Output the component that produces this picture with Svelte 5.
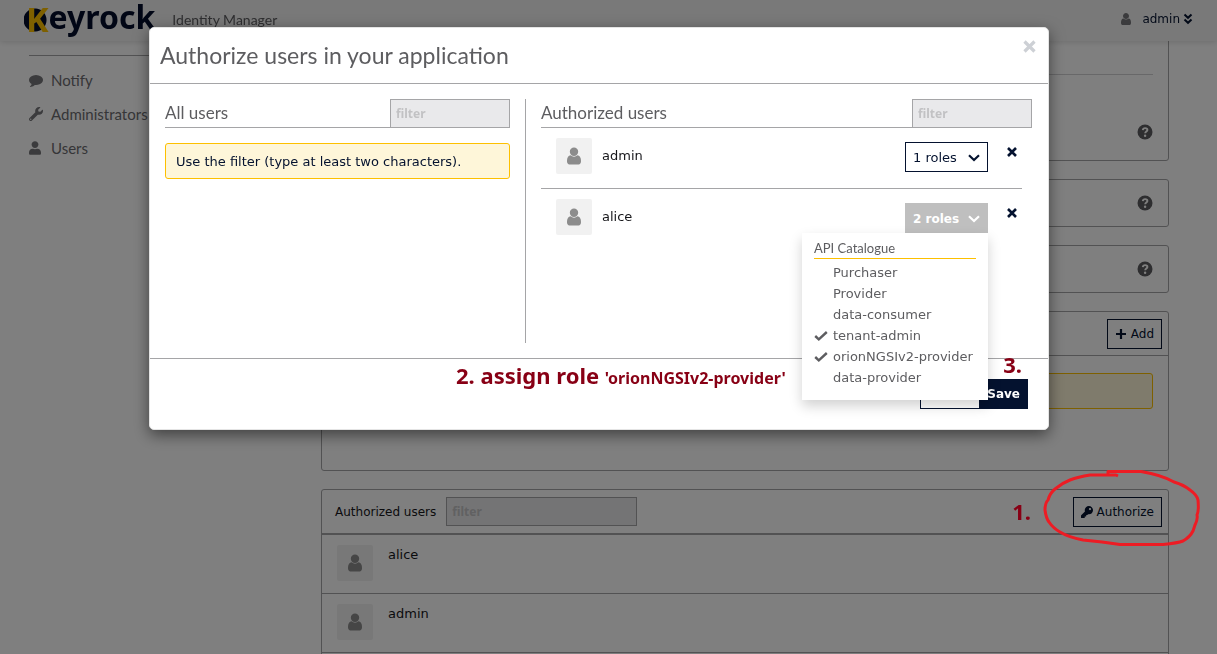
<script lang="ts">
  const nav = [
    { label: 'Notify', icon: 'comment' },
    { label: 'Administrators', icon: 'wrench' },
    { label: 'Users', icon: 'user' },
  ];
  const members = ['alice', 'admin', ''];
  const roles = [
    { name: 'Purchaser', on: false },
    { name: 'Provider', on: false },
    { name: 'data-consumer', on: false },
    { name: 'tenant-admin', on: true },
    { name: 'orionNGSIv2-provider', on: true },
    { name: 'data-provider', on: false },
  ];
  const authorized = [
    { name: 'admin', count: 1, open: false },
    { name: 'alice', count: 2, open: true },
  ];
</script>

{#snippet person()}
  <svg class="person" viewBox="0 0 1280 1792" aria-hidden="true"><path fill="currentColor" d="M1280 1399q0 109-62.500 187t-150.500 78h-854q-88 0-150.500-78t-62.500-187q0-85 8.500-160.500t31.500-152 58.500-131 94-89 134.500-34.500q131 128 313 128t313-128q76 0 134.500 34.500t94 89 58.500 131 31.500 152 8.500 160.500zm-256-887q0 159-112.500 271.500t-271.500 112.500-271.500-112.500-112.500-271.500 112.500-271.500 271.500-112.500 271.500 112.500 112.500 271.500z" /></svg>
{/snippet}

{#snippet help()}
  <svg class="help" viewBox="0 0 16 16" aria-hidden="true">
    <circle cx="8" cy="8" r="7.500" fill="#5d5d60" />
    <path d="M5.800 6.100C6 4.700 7 4.100 8.100 4.100c1.300 0 2.300.8 2.300 1.900C10.400 7.500 8.200 7.600 8.200 9.200" fill="none" stroke="#fff" stroke-width="1.900" />
    <circle cx="8.100" cy="11.700" r="1.200" fill="#fff" />
  </svg>
{/snippet}

{#snippet cross()}
  <svg class="cross" viewBox="0 0 12 12" aria-hidden="true"><path d="M2 2l8 8M10 2l-8 8" fill="none" stroke="currentColor" stroke-width="2.600" /></svg>
{/snippet}

<div class="page">
  <header class="top">
    <a class="logo" href="#home"><span class="k">K</span>eyrock</a>
    <span class="tagline">Identity Manager</span>
    <button class="account" type="button">
      {@render person()}
      <span>admin</span>
      <svg class="chev2" viewBox="0 0 10 12" aria-hidden="true"><path d="M1.500 1.500L5 4.800l3.500-3.300M1.500 6.500L5 9.800l3.500-3.300" fill="none" stroke="currentColor" stroke-width="2" /></svg>
    </button>
  </header>

  <div class="columns">
    <nav class="side">
      {#each nav as item}
        <a href="#{item.icon}">
          <span class="ico">
            {#if item.icon === 'comment'}
              <svg viewBox="0 0 1792 1792" width="14" height="14" aria-hidden="true"><path fill="currentColor" d="M1792 896q0 174-120 321.500t-326 233-450 85.500q-70 0-145-8-198 175-460 242-49 14-114 22-17 2-30.500-9t-17.500-29v-1q-3-4-.5-12t2-10 4.500-9.500l6-9 7-8.500 8-9q7-8 31-34.500t34.500-38 31-39.500 32.500-51 27-59 26-76q-157-89-247.500-220t-90.500-281q0-130 71-248.500t191-204.500 286-136.500 348-50.500 348 50.500 286 136.500 191 204.500 71 248.500z" /></svg>
            {:else if item.icon === 'wrench'}
              <svg viewBox="0 0 512 512" width="14" height="14" aria-hidden="true"><path fill="currentColor" d="M507.730 109.100c-2.240-9.030-13.540-12.090-20.120-5.510l-74.360 74.360-67.880-11.310-11.310-67.880 74.360-74.360c6.620-6.620 3.430-17.900-5.660-20.160-47.380-11.740-99.550.91-136.580 37.930-39.640 39.640-50.550 97.100-34.050 147.200L18.740 402.760c-24.990 24.990-24.990 65.510 0 90.500 24.990 24.990 65.510 24.990 90.500 0l213.210-213.210c50.120 16.710 107.470 5.680 147.370-34.220 37.070-37.070 49.700-89.320 37.910-136.730zM64 472c-13.250 0-24-10.750-24-24 0-13.260 10.750-24 24-24s24 10.740 24 24c0 13.250-10.750 24-24 24z" /></svg>
            {:else}
              <svg viewBox="0 0 448 512" width="12" height="14" aria-hidden="true"><path fill="currentColor" d="M224 256c70.700 0 128-57.300 128-128S294.700 0 224 0 96 57.300 96 128s57.300 128 128 128zm89.600 32h-16.700c-22.200 10.200-46.900 16-72.900 16s-50.600-5.800-72.900-16h-16.700C60.200 288 0 348.200 0 422.400V464c0 26.500 21.500 48 48 48h352c26.500 0 48-21.500 48-48v-41.600c0-74.200-60.200-134.400-134.400-134.400z" /></svg>
            {/if}
          </span>
          {item.label}
        </a>
      {/each}
    </nav>

    <main>
      <section class="panel info"><hr />{@render help()}</section>
      <section class="panel slim">{@render help()}</section>
      <section class="panel slim">{@render help()}</section>
      <section class="panel roles">
        <div class="bar">
          <button class="btn small" type="button">
            <svg viewBox="0 0 12 12" width="12" height="12" aria-hidden="true"><path d="M6 1v10M1 6h10" fill="none" stroke="currentColor" stroke-width="2.200" /></svg>
            Add
          </button>
        </div>
        <div class="notice"></div>
      </section>
      <section class="panel">
        <div class="bar heavy">
          <label for="member-filter">Authorized users</label>
          <input id="member-filter" class="filter wide" placeholder="filter" />
          <button class="btn small" type="button">
            <svg viewBox="0 0 512 512" width="12" height="12" aria-hidden="true"><path fill="currentColor" d="M512 176.001C512 273.203 433.202 352 336 352c-11.220 0-22.190-1.062-32.827-3.069l-24.012 27.014A23.999 23.999 0 0 1 261.223 384H224v40c0 13.255-10.745 24-24 24h-40v40c0 13.255-10.745 24-24 24H24c-13.255 0-24-10.745-24-24v-78.059c0-6.365 2.529-12.470 7.029-16.971l161.802-161.802C163.108 213.814 160 195.271 160 176 160 78.798 238.797.001 335.999 0 433.488-.001 512 78.511 512 176.001zM336 128c0 26.510 21.490 48 48 48s48-21.490 48-48-21.490-48-48-48-48 21.490-48 48z" /></svg>
            Authorize
          </button>
        </div>
        {#each members as m}
          <div class="member">
            {#if m}<span class="avatar">{@render person()}</span><span>{m}</span>{/if}
          </div>
        {/each}
      </section>
    </main>
  </div>
</div>

<div class="backdrop">
  <div class="dialog" role="dialog" aria-labelledby="dialog-title">
    <div class="dialog-head">
      <h2 id="dialog-title">Authorize users in your application</h2>
      <button class="close" type="button" aria-label="Close">{@render cross()}</button>
    </div>
    <div class="dialog-body">
      <section class="all">
        <div class="list-head">
          <h3><label for="all-filter">All users</label></h3>
          <input id="all-filter" class="filter" placeholder="filter" />
        </div>
        <p class="hint">Use the filter (type at least two characters).</p>
      </section>
      <section class="granted">
        <div class="list-head">
          <h3><label for="granted-filter">Authorized users</label></h3>
          <input id="granted-filter" class="filter" placeholder="filter" />
        </div>
        {#each authorized as user}
          <div class="row">
            <span class="avatar">{@render person()}</span>
            <span class="name">{user.name}</span>
            <div class="picker">
              <button class="btn" class:open={user.open} type="button" aria-expanded={user.open}>
                {user.count} roles
                <svg viewBox="0 0 12 8" width="12" height="8" aria-hidden="true"><path d="M1 1.300l5 4.700 5-4.700" fill="none" stroke="currentColor" stroke-width="2.200" /></svg>
              </button>
              {#if user.open}
                <div class="menu">
                  <h4>API Catalogue</h4>
                  <ul>
                    {#each roles as role}
                      <li>
                        <button type="button">
                          <span class="tick">
                            {#if role.on}<svg viewBox="0 0 14 10" width="14" height="10" aria-hidden="true"><path d="M1.200 5l3.600 3.300L12.800 1" fill="none" stroke="currentColor" stroke-width="2.400" /></svg>{/if}
                          </span>{role.name}
                        </button>
                      </li>
                    {/each}
                  </ul>
                </div>
              {/if}
            </div>
            <button class="remove" type="button" aria-label="Remove {user.name}">{@render cross()}</button>
          </div>
        {/each}
      </section>
    </div>
    <div class="dialog-foot">
      <button class="btn cancel" type="button">Cancel</button>
      <button class="btn save" type="button">Save</button>
    </div>
    <p class="note step2">2. assign role <small>'orionNGSIv2-provider'</small></p>
    <p class="note step3">3.</p>
  </div>
  <p class="note step1">1.</p>
  <svg class="ring" viewBox="0 0 164 84" aria-hidden="true">
    <path d="M78 11L76 10H50Q38 12 30 15T15 24Q10 28 8 35Q5 38 5 45Q6 53 9 57Q13 63 20 67Q28 72 43 75L62 77L80 79.500H123Q138 78 143 76Q150 72 153 66L155 60Q158 54 157 50Q159 46 158 35Q157 30 150 25Q144 20 134 17Q122 10 101 6.500H68V11" fill="none" stroke="#ed1c24" stroke-width="3" stroke-linejoin="round" />
  </svg>
</div>

<style>
  :global(body) { margin: 0; overflow: hidden; }
  .page, .backdrop { font: 13px/20px "DejaVu Sans", Verdana, sans-serif; color: #16161a; }
  .page *, .backdrop * { box-sizing: border-box; }
  .page { height: 100vh; overflow: hidden; background: #fff; }
  svg { display: block; flex: none; }
  button, input { font: inherit; color: inherit; }
  button { background: none; border: 0; padding: 0; }
  a { color: inherit; text-decoration: none; }
  h2, h3, h4, p, ul { margin: 0; padding: 0; list-style: none; font-weight: 400; }
  .person { width: 14px; height: 20px; color: #8c8c8c; }

  .top { position: fixed; inset: 0 0 auto; height: 41px; display: flex; background: #f2f2f2; box-shadow: 0 1px 6px rgba(0, 0, 0, 0.15); padding: 0 24px; z-index: 1; }
  .logo { font: 700 32px/34px "Noto Sans", sans-serif; color: #030d2b; background: radial-gradient(circle at 11px 20px, #030d2b 11px, transparent 12px); }
  .k { color: #fdc000; padding-left: 2px; font-size: 34px; line-height: 30px; vertical-align: -3px; }
  .tagline { font: 14px/40px Lato, sans-serif; color: #5d5d60; margin-left: 17px; }
  .account { margin-left: auto; display: flex; align-items: center; height: 37px; font-size: 12px; color: #04122f; }
  .account .person { width: 10px; height: 14px; margin-right: 11px; color: #77777a; }
  .chev2 { width: 10px; height: 12px; margin-left: 3px; }

  .columns { display: flex; padding: 20px 48px 0 29px; }
  .side { width: 292px; padding-right: 60px; margin-top: 35px; flex: none; }
  .side::before { content: ""; display: block; height: 1px; background: #a5a5a7; margin-bottom: 7px; }
  .side a { display: flex; align-items: center; height: 34px; font: 15px/20px Lato, sans-serif; color: #6c6c70; }
  .ico { width: 22px; color: #77777a; }
  main { flex: 1; display: flex; flex-direction: column; gap: 18px; }
  .panel { border: 1px solid #a5a5a7; border-radius: 3px; }
  .info { display: flex; flex-direction: column; align-items: flex-end; padding: 53px 15px 20px; }
  .info hr { width: 100%; height: 1px; border: 0; margin: 0 0 49px; background: #d0d0d2; }
  .help { width: 16px; height: 16px; }
  .slim { display: flex; justify-content: flex-end; padding: 15px; }
  .roles { padding-bottom: 61px; }
  .bar { display: flex; align-items: center; height: 44px; padding: 0 6px 0 13px; border-bottom: 1px solid #a5a5a7; font-size: 12px; }
  .heavy { border-bottom-width: 2px; height: 45px; }
  .bar .btn { margin-left: auto; }
  .bar .wide { width: 191px; margin-left: 10px; }
  .notice { height: 36px; margin: 17px 15px 0; border: 1px solid #fdc000; border-radius: 3px; background: #fef6d9; }
  .member { display: flex; gap: 15px; height: 59px; padding: 10px 15px; border-bottom: 1px solid #a5a5a7; }
  .member > span:last-child { line-height: 20px; }

  .btn { display: flex; align-items: center; justify-content: center; gap: 4px; height: 30px; padding: 0 7px; border: 1px solid #04122f; color: #04122f; white-space: nowrap; }
  .small { font-size: 12px; }
  .avatar { flex: none; width: 36px; height: 36px; border-radius: 2px; background: #f1f1f1; display: grid; place-items: center; }
  .filter { width: 120px; height: 29px; margin: 0; padding: 0 5px; border: 1px solid #a5a5a7; border-radius: 0; background: #e9e9eb; }
  .filter::placeholder { color: #c2c2c4; opacity: 1; font: 700 12px "Noto Sans", sans-serif; }

  .backdrop { position: fixed; inset: 0; z-index: 2; padding: 27px 19px 0 0; background: rgba(0, 0, 0, 0.5); }
  .dialog { position: relative; max-width: 900px; margin: 0 auto; background: #fff; border: 1px solid #e4e4e4; border-radius: 5px; box-shadow: 0 5px 15px rgba(0, 0, 0, 0.5); }
  .dialog-head { display: flex; justify-content: space-between; height: 56px; padding: 0 10px; border-bottom: 1px solid #a5a5a7; }
  h2, h3, h4 { font-family: Lato, sans-serif; color: #5d5d60; }
  h2 { font-size: 23px; line-height: 54px; }
  .close { display: grid; place-items: center; width: 18px; height: 36px; color: #cdd0d5; }
  .close .cross { width: 15px; height: 15px; }
  .cross { width: 12px; height: 12px; }
  .dialog-body { display: flex; padding: 15px; border-bottom: 1px solid #a5a5a7; }
  .all { flex: 0 0 361px; padding-right: 15px; border-right: 1px solid #a5a5a7; min-height: 244px; }
  .granted { flex: 1; padding-left: 15px; }
  .list-head { display: flex; justify-content: space-between; height: 29px; border-bottom: 1px solid #a5a5a7; }
  h3 { font-size: 17px; line-height: 28px; }
  .granted .list-head { margin-right: 1px; }
  .hint { margin-top: 15px; padding: 8px 10px 6px; border: 1px solid #fdc000; border-radius: 3px; background: #fef6d9; color: #04122f; }
  .row { display: flex; margin-right: 11px; padding: 10px 4px 14px 15px; border-bottom: 1px solid #a5a5a7; }
  .row:last-child { border: 0; }
  .name { margin-left: 10px; line-height: 36px; }
  .picker { position: relative; margin: 4px 18px 0 auto; }
  .picker .btn { width: 83px; height: 30px; justify-content: space-between; padding: 1px 7px 0; }
  .picker .open { border-color: #bfbfbf; background: #bfbfbf; color: #fff; font-weight: 700; font-size: 12px; }
  .remove { height: 28px; color: #04122f; }
  .menu { position: absolute; top: 30px; right: 0; z-index: 1; width: 186px; padding: 6px 12px 12px; background: #fff; box-shadow: 0 6px 12px rgba(0, 0, 0, 0.18); }
  h4 { font-size: 13px; line-height: 19px; border-bottom: 1px solid #fdc000; margin-bottom: 3px; }
  li button { display: flex; align-items: center; height: 21px; color: #5d5d60; white-space: nowrap; }
  .tick { width: 19px; }
  .dialog-foot { display: flex; justify-content: flex-end; padding: 20px; }
  .cancel { width: 60px; margin-right: -1px; }
  .save { background: #04122f; color: #fff; font-weight: 700; font-size: 12px; }

  .note { position: absolute; font: 700 22px/24px "Noto Sans", sans-serif; color: #880015; white-space: nowrap; }
  .note small { font-size: 16px; }
  .step1 { top: 499px; right: 186px; }
  .step2 { top: 335px; left: 306px; }
  .step3 { top: 324px; right: 26px; }
  .ring { position: absolute; top: 465px; right: 13px; width: 164px; height: 84px; }
</style>
